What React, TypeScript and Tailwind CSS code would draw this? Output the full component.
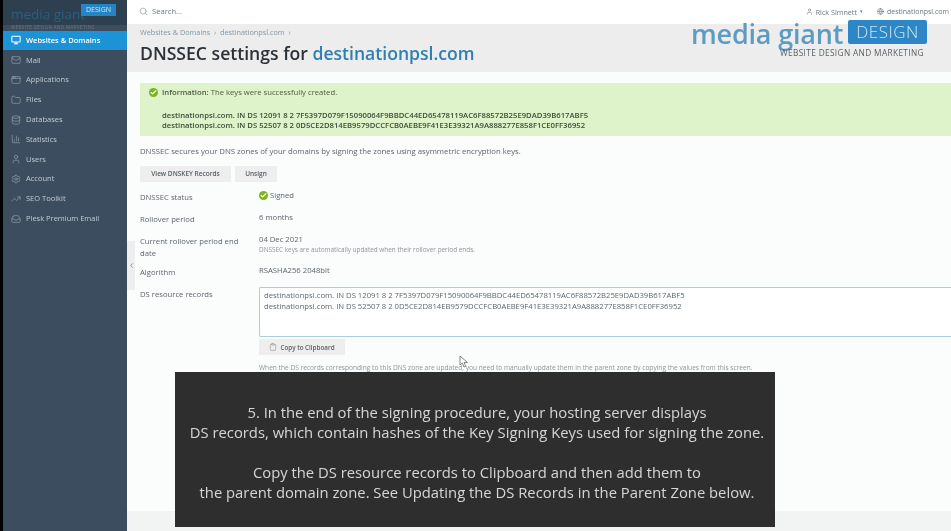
import {
  AppWindow,
  BarChart3,
  Check,
  ChevronLeft,
  Clipboard,
  Database,
  Folder,
  Globe,
  Mail,
  Monitor,
  Search,
  Settings,
  TrendingUp,
  User,
  Inbox,
} from 'lucide-react'

const navItems = [
  { label: 'Websites & Domains', icon: Monitor, active: true },
  { label: 'Mail', icon: Mail },
  { label: 'Applications', icon: AppWindow },
  { label: 'Files', icon: Folder },
  { label: 'Databases', icon: Database },
  { label: 'Statistics', icon: BarChart3 },
  { label: 'Users', icon: User },
  { label: 'Account', icon: Settings },
  { label: 'SEO Toolkit', icon: TrendingUp },
  { label: 'Plesk Premium Email', icon: Inbox },
]

const recordOne =
  'destinationpsl.com. IN DS 12091 8 2 7F5397D079F15090064F9BBDC44ED65478119AC6F88572B25E9DAD39B617ABF5'
const recordTwo =
  'destinationpsl.com. IN DS 52507 8 2 0D5CE2D814EB9579DCCFCB0AEBE9F41E3E39321A9A888277E858F1CE0FF36952'

function GreenCheck({ className }: { className: string }) {
  return (
    <span className={`flex items-center justify-center rounded-full bg-[#7ab51d] text-white ${className}`}>
      <Check size={7} strokeWidth={4} />
    </span>
  )
}

function Sidebar() {
  return (
    <aside className="flex w-[127px] shrink-0 flex-col border-l-[3px] border-black bg-[#3b4d5e]">
      <div className="flex h-[25px] items-start bg-[#2e3f4f] pl-[8px] pt-[1px]">
        <div className="relative h-[22px] w-[110px]">
          <span className="text-[13.5px] leading-[17px] text-[#2a5f80]">media giant</span>
          <span className="absolute left-[70px] top-[3px] flex h-[12px] w-[35px] items-center justify-center bg-[#2585c4] text-[7px] text-[#cfe6f5]">
            DESIGN
          </span>
          <div className="text-[4.5px] leading-[5px] tracking-[0.4px] whitespace-nowrap text-[#6b7a86]">WEBSITE DESIGN AND MARKETING</div>
        </div>
      </div>
      <nav className="mt-[5.5px] flex flex-col">
        {navItems.map((item) => (
          <div
            key={item.label}
            className={`flex h-[19.8px] items-center gap-[5px] pl-[8px] text-[7.5px] ${
              item.active ? 'bg-[#1b93d6] font-semibold text-white' : 'text-[#c3ccd3]'
            }`}
          >
            <item.icon size={10} strokeWidth={item.active ? 2.5 : 1.5} className={item.active ? 'text-white' : 'text-[#9aa7b1]'} />
            <span className="whitespace-nowrap">{item.label}</span>
          </div>
        ))}
      </nav>
    </aside>
  )
}

function TopBar() {
  return (
    <header className="flex h-[24px] shrink-0 items-center justify-between bg-white pl-[12px] pr-[2px] text-[7.2px] text-[#6d7780]">
      <div className="flex items-center gap-[4px]">
        <Search size={9} className="text-[#9aa2a8]" />
        <span className="text-[7.6px]">Search...</span>
      </div>
      <div className="flex items-center gap-[14px]">
        <div className="flex items-center gap-[3px]">
          <User size={7} />
          <span>Rick Simnett</span>
          <span className="text-[5px]">▾</span>
        </div>
        <div className="flex items-center gap-[3px]">
          <Globe size={7} />
          <span className="text-[7px]">destinationpsl.com</span>
        </div>
      </div>
    </header>
  )
}

function Row({ label, top, children }: { label: string; top: string; children: React.ReactNode }) {
  return (
    <div className={`flex ${top}`}>
      <div className="w-[119px] shrink-0 pr-[14px] text-[7.7px] leading-[12px] text-[#5c666e]">{label}</div>
      <div className="-mt-[1.5px] min-w-0 flex-1 text-[7.7px] leading-[11px] text-[#5c666e]">{children}</div>
    </div>
  )
}

export default function App() {
  return (
    <div className="relative flex h-[531px] w-[951px] overflow-hidden bg-[#fbfcfc] font-['Open_Sans',sans-serif] [filter:blur(0.5px)]">
      <Sidebar />
      <main className="flex min-w-0 flex-1 flex-col">
        <TopBar />
        <div className="h-[48px] shrink-0 bg-[#ededed] pl-[13px] pt-[4px]">
          <div className="text-[7.3px] leading-[9px] text-[#7d98a8]">Websites &amp; Domains &nbsp;›&nbsp; destinationpsl.com &nbsp;›</div>
          <h1 className="mt-[4px] text-[17.6px] leading-[24px] font-semibold whitespace-nowrap text-[#2b3136]">
            DNSSEC settings for <span className="text-[#2f7fb0]">destinationpsl.com</span>
          </h1>
        </div>

        <div className="flex min-h-0 flex-1 flex-col pl-[13px]">
          <section className="mt-[11px] h-[53px] shrink-0 bg-[#def3c9] pl-[9px] pt-[4px] text-[7.7px] leading-[10px] text-[#4d5a45]">
            <div className="flex items-center gap-[4px]">
              <GreenCheck className="h-[9px] w-[9px]" />
              <span>
                <b className="font-semibold">Information:</b> The keys were successfully created.
              </span>
            </div>
            <div className="mt-[13px] pl-[13px] text-[7.7px] font-semibold whitespace-nowrap text-[#3e4a38]">
              <div>{recordOne}</div>
              <div>{recordTwo}</div>
            </div>
          </section>

          <p className="mt-[9.5px] text-[7.75px] leading-[11px] text-[#5c666e]">
            DNSSEC secures your DNS zones of your domains by signing the zones using asymmetric encryption keys.
          </p>

          <div className="mt-[9.5px] flex gap-[4px]">
            <button className="h-[16px] w-[91px] bg-[#eeeeee] text-[6.5px] font-semibold text-[#555d63]">View DNSKEY Records</button>
            <button className="h-[16px] w-[42px] bg-[#eeeeee] text-[6.5px] font-semibold text-[#555d63]">Unsign</button>
          </div>

          <Row label="DNSSEC status" top="mt-[9px]">
            <span className="flex items-center gap-[2px]">
              <GreenCheck className="h-[9px] w-[9px]" />
              Signed
            </span>
          </Row>
          <Row label="Rollover period" top="mt-[10px]">
            6 months
          </Row>
          <Row label="Current rollover period end date" top="mt-[10px]">
            04 Dec 2021
            <div className="text-[6.4px] leading-[9px] whitespace-nowrap text-[#8d959b]">
              DNSSEC keys are automatically updated when their rollover period ends.
            </div>
          </Row>
          <Row label="Algorithm" top="mt-[7px]">
            RSASHA256 2048bit
          </Row>
          <Row label="DS resource records" top="mt-[10px]">
            <div className="h-[50px] rounded-l-[2px] border border-r-0 border-[#a9cfe4] bg-white pl-[4px] pt-[2px] text-[7.7px] leading-[11px] whitespace-nowrap text-[#5c666e]">
              <div>{recordOne}</div>
              <div>{recordTwo}</div>
            </div>
            <button className="mt-[2.5px] flex h-[16px] w-[86px] items-center justify-center gap-[3px] bg-[#eeeeee] text-[6.3px] font-semibold text-[#555d63]">
              <Clipboard size={8} className="text-[#999]" />
              Copy to Clipboard
            </button>
            <p className="mt-[7.5px] text-[6.6px] leading-[9px] whitespace-nowrap text-[#8d959b]">
              When the DS records corresponding to this DNS zone are updated, you need to manually update them in the parent zone by copying the values from this screen.
            </p>
          </Row>

          <div className="mt-auto h-[20px] shrink-0 bg-[#f2f3f3] -ml-[13px]" />
        </div>
      </main>

      {/* sidebar collapse handle */}
      <div className="absolute left-[127px] top-[241px] flex h-[49px] w-[8px] items-center justify-center bg-[#eeeeee] text-[#7b848a]">
        <ChevronLeft size={7} strokeWidth={3} />
      </div>

      {/* watermark logo from the video */}
      <div className="absolute left-[691px] top-[17px] h-[45px] w-[240px]">
        <span className="absolute left-0 top-[3px] text-[27px] leading-[27px] font-semibold tracking-[-0.2px] whitespace-nowrap text-[#5d9cc0]">
          media giant
        </span>
        <span className="absolute left-[157px] top-[3px] flex h-[24px] w-[79px] items-center justify-center rounded-[2px] bg-[#2d86c5] text-[17px] font-light tracking-[0.5px] text-[#cde6f6]">
          DESIGN
        </span>
        <span className="absolute left-[89px] top-[31px] text-[8.3px] leading-[10px] tracking-[0.35px] whitespace-nowrap text-[#5a5f63]">
          WEBSITE DESIGN AND MARKETING
        </span>
      </div>

      {/* mouse cursor */}
      <svg className="absolute left-[459px] top-[355px] h-[13px] w-[10px]" viewBox="0 0 10 13">
        <path d="M1 1v9l2.4-2 1.6 4 1.7-.7-1.6-3.8H8.5z" fill="#fff" stroke="#666" strokeWidth="0.8" />
      </svg>

      {/* caption box */}
      <div className="absolute left-[175px] top-[372px] flex h-[155px] w-[600px] flex-col items-center justify-center bg-[#2e2e2e] pl-[4px] pt-[5px] text-center text-[14.8px] leading-[20px] text-[#d6d6d6]">
        <p>5. In the end of the signing procedure, your hosting server displays</p>
        <p className="whitespace-nowrap">DS records, which contain hashes of the Key Signing Keys used for signing the zone.</p>
        <p className="mt-[20px]">Copy the DS resource records to Clipboard and then add them to</p>
        <p className="whitespace-nowrap">the parent domain zone. See Updating the DS Records in the Parent Zone below.</p>
      </div>
    </div>
  )
}
